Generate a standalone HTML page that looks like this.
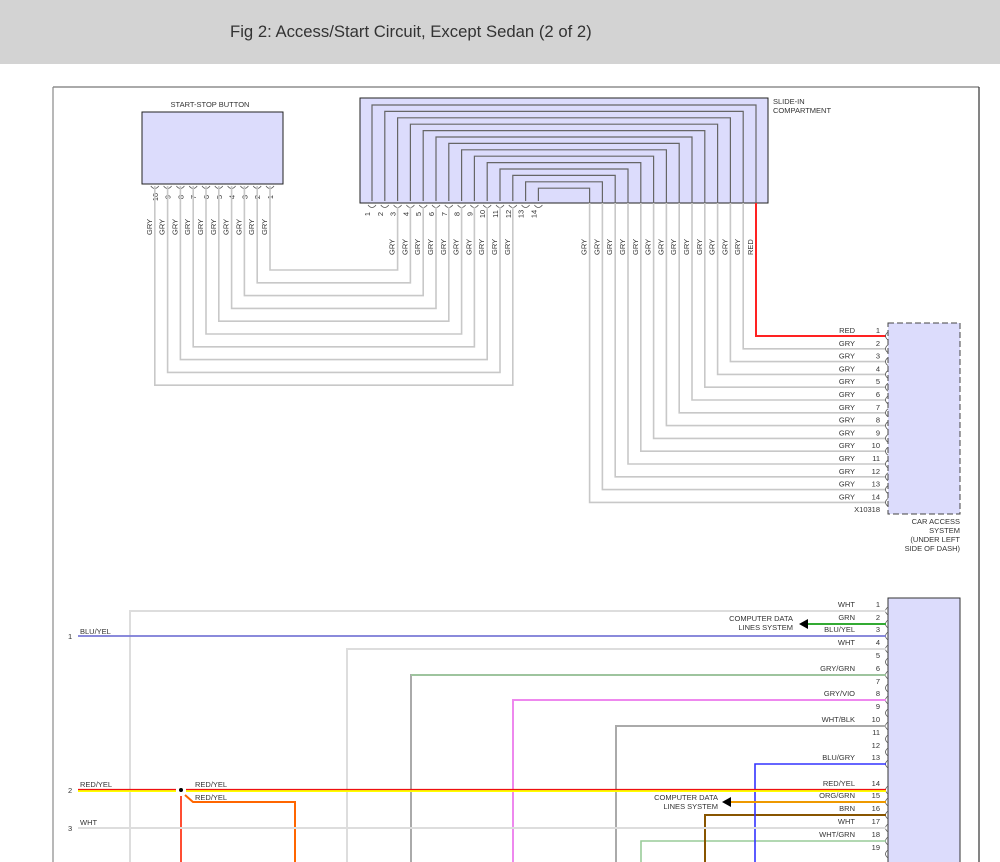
<!DOCTYPE html>
<html><head><meta charset="utf-8"><style>
html,body{margin:0;padding:0;background:#fff;width:1000px;height:862px;overflow:hidden}
#hdr{position:absolute;left:0;top:0;width:1000px;height:64px;background:#d3d3d3}
#hdr span{position:absolute;left:230px;top:22px;font:16.7px "Liberation Sans",sans-serif;color:#333}
svg{position:absolute;left:0;top:0}
text{font-family:"Liberation Sans",sans-serif;font-size:7.5px;fill:#333}
</style></head><body>
<div id="hdr"><span>Fig 2: Access/Start Circuit, Except Sedan (2 of 2)</span></div>
<svg id="s" width="1000" height="862" xmlns="http://www.w3.org/2000/svg">
<line x1="53" y1="87" x2="979" y2="87" stroke="#777" stroke-width="1.2"/>
<line x1="53" y1="87" x2="53" y2="862" stroke="#888" stroke-width="1.2"/>
<line x1="979" y1="87" x2="979" y2="862" stroke="#333" stroke-width="1.2"/>
<text x="210" y="107" text-anchor="middle">START-STOP BUTTON</text>
<rect x="142" y="112" width="141" height="72" fill="#dcdcfc" stroke="#222"/>
<rect x="360" y="98" width="408" height="105" fill="#dcdcfc" stroke="#222"/>
<text x="773" y="104">SLIDE-IN</text><text x="773" y="113">COMPARTMENT</text>
<rect x="888" y="323" width="72" height="191" fill="#dcdcfc" stroke="#444" stroke-dasharray="6,3"/>
<text x="880" y="512" text-anchor="end">X10318</text>
<text x="960" y="524" text-anchor="end">CAR ACCESS</text>
<text x="960" y="533" text-anchor="end">SYSTEM</text>
<text x="960" y="542" text-anchor="end">(UNDER LEFT</text>
<text x="960" y="551" text-anchor="end">SIDE OF DASH)</text>
<rect x="888" y="598" width="72" height="270" fill="#dcdcfc" stroke="#333"/>
<g id="g"></g>
</svg>
<script>
var g=document.getElementById('g'),h='';
function L(x1,y1,x2,y2,c,w){h+='<line x1="'+x1+'" y1="'+y1+'" x2="'+x2+'" y2="'+y2+'" stroke="'+c+'" stroke-width="'+(w||1.6)+'"/>';}
function P(d,c,w){h+='<path d="'+d+'" fill="none" stroke="'+c+'" stroke-width="'+(w||1.6)+'"/>';}
function T(x,y,t,a,rot){h+='<text x="'+x+'" y="'+y+'"'+(a?' text-anchor="'+a+'"':'')+(rot?' transform="rotate(-90 '+x+' '+y+')"':'')+'>'+t+'</text>';}
function hookD(x,y){P('M'+(x-4)+' '+y+' Q'+x+' '+(y+5)+' '+(x+4)+' '+y,'#555',0.8);}
function hookR(x,y){P('M'+x+' '+(y-4)+' Q'+(x-5)+' '+y+' '+x+' '+(y+4),'#555',0.8);}
function RY(x1,x2,y){L(x1,y+1,x2,y+1,'#ff0',2);L(x1,y-0.5,x2,y-0.5,'#e11',1.2);}
var G='#c8c8c8';
var sp=[];for(var k=1;k<=10;k++){sp[k]=270-12.8*(k-1);}
for(k=1;k<=10;k++){var x=sp[k];hookD(x,186);T(x+3,197,''+k,'middle',1);T(x-3,235,'GRY','',1);}
var lp=[],rp=[],ly=[];for(k=1;k<=14;k++){lp[k]=372+12.8*(k-1);rp[k]=756-12.8*(k-1);ly[k]=105+6.4*(k-1);}
for(k=1;k<=14;k++){P('M'+lp[k]+' 201 V'+ly[k]+' H'+rp[k]+' V203','#666',1.2);hookD(lp[k],205);T(lp[k]-2,214,''+k,'middle',1);}
for(k=1;k<=10;k++){var yy=270+12.8*(k-1);P('M'+sp[k]+' 186 V'+yy+' H'+lp[k+2]+' V207',G);T(lp[k+2]-3,255,'GRY','',1);}
var cy=[];for(k=1;k<=14;k++){cy[k]=336+12.8*(k-1);}
for(k=1;k<=14;k++){var c=k==1?'#f22':G;P('M'+rp[k]+' 203 V'+cy[k]+' H886',c,k==1?2:1.6);T(rp[k]-3,255,k==1?'RED':'GRY','',1);hookR(888,cy[k]);T(855,cy[k]-3,k==1?'RED':'GRY','end');T(880,cy[k]-3,''+k,'end');}
var by=[0,611,624,636,649,662,675,688,700,713,726,739,752,764,790,802,815,828,841,854];
var lab=['','WHT','GRN','BLU/YEL','WHT','','GRY/GRN','','GRY/VIO','','WHT/BLK','','','BLU/GRY','RED/YEL','ORG/GRN','BRN','WHT','WHT/GRN',''];
for(k=1;k<=19;k++){hookR(888,by[k]);T(880,by[k]-4,''+k,'end');if(lab[k])T(855,by[k]-4,lab[k],'end');}
P('M130 862 V611 H886','#ddd',2);
P('M808 624 H886','#3a3',2);h+='<polygon points="799,624 808,619 808,629" fill="#000"/>';
T(793,621,'COMPUTER DATA','end');T(793,630,'LINES SYSTEM','end');
L(78,636,886,636,'#7a7ad6',1.8);
P('M347 862 V649 H886','#ddd',2);
P('M411 862 V675 H886','#aaa',2);P('M411 675 H886','#9c9',1.6);
P('M513 862 V700 H886','#e8e',2);
P('M616 862 V726 H886','#aaa',2);
P('M641 862 V841 H886','#9c9',1.6);
P('M705 862 V815 H886','#850',2);
P('M755 862 V764 H886','#33f',1.6);
RY(78,176,790);RY(186,886,790);
h+='<circle cx="181" cy="790" r="2" fill="#000"/>';
P('M181 796 V862','#f20',1.6);P('M185 795 L193 802 H295 V862','#f60',2);
P('M731 802 H886','#e90',2);h+='<polygon points="722,802 731,797 731,807" fill="#000"/>';
T(718,800,'COMPUTER DATA','end');T(718,809,'LINES SYSTEM','end');
L(78,828,886,828,'#ddd',2);
T(68,639,'1');T(80,634,'BLU/YEL');T(68,793,'2');T(80,787,'RED/YEL');T(68,831,'3');T(80,825,'WHT');
T(195,787,'RED/YEL');T(195,800,'RED/YEL');
g.innerHTML=h;
</script>
</body></html>
